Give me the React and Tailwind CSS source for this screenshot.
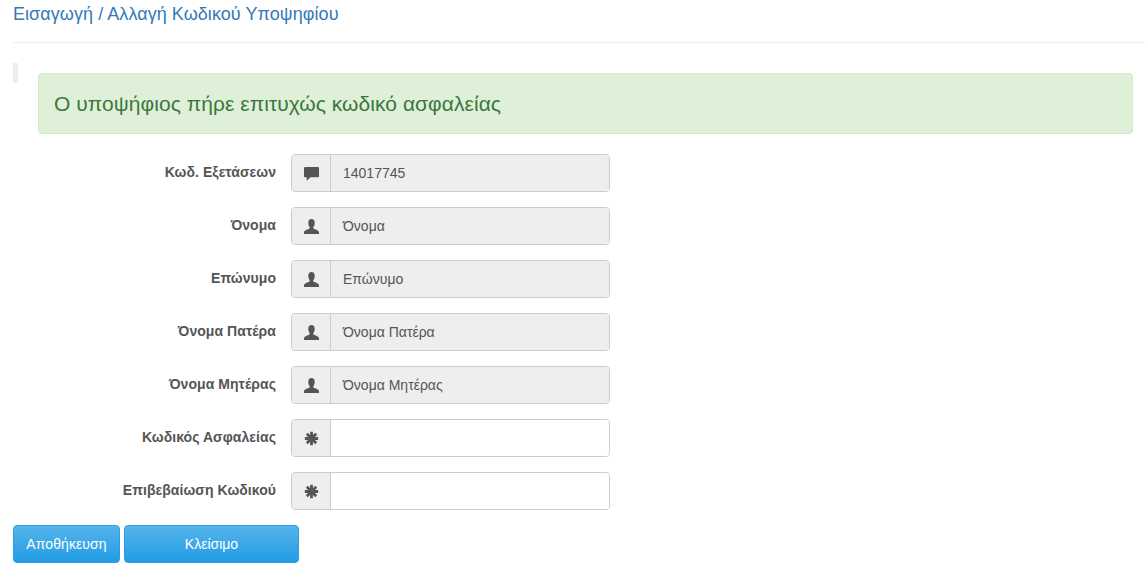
const ff = "font-['Liberation_Sans',Arial,sans-serif]";

function Comment() {
  return (
    <svg width="15" height="15" viewBox="0 0 14 14" className="block">
      <path d="M0 2Q0 1 1 1H13Q14 1 14 2V9.5Q14 10.5 13 10.5H6L2.5 13.8V10.5H1Q0 10.5 0 9.5Z" fill="#555" />
    </svg>
  );
}
function User() {
  return (
    <svg width="15" height="15" viewBox="0 0 14 14" className="block">
      <path d="M7 0C9 0 10 1.6 10 3.6C10 5.6 9.3 7 8.7 7.7C8.5 8.6 8.8 9 9.7 9.3C11.5 10 13.6 10.6 14 12.2V14H0V12.2C0.4 10.6 2.5 10 4.3 9.3C5.2 9 5.5 8.6 5.3 7.7C4.7 7 4 5.6 4 3.6C4 1.6 5 0 7 0Z" fill="#555" />
    </svg>
  );
}
function Asterisk() {
  return (
    <svg width="15" height="15" viewBox="0 0 14 14" className="block">
      <g stroke="#555" strokeWidth="2.6">
        <path d="M7 0.8V13.2" />
        <path d="M0.8 7H13.2" />
        <path d="M2.6 2.6L11.4 11.4" />
        <path d="M11.4 2.6L2.6 11.4" />
      </g>
      <circle cx="7" cy="7" r="3.6" fill="#555" />
    </svg>
  );
}

const rows = [
  { label: "Κωδ. Εξετάσεων", icon: <Comment />, value: "14017745", disabled: true },
  { label: "Όνομα", icon: <User />, placeholder: "Όνομα", disabled: true },
  { label: "Επώνυμο", icon: <User />, placeholder: "Επώνυμο", disabled: true },
  { label: "Όνομα Πατέρα", icon: <User />, placeholder: "Όνομα Πατέρα", disabled: true },
  { label: "Όνομα Μητέρας", icon: <User />, placeholder: "Όνομα Μητέρας", disabled: true },
  { label: "Κωδικός Ασφαλείας", icon: <Asterisk />, disabled: false },
  { label: "Επιβεβαίωση Κωδικού", icon: <Asterisk />, disabled: false },
];

function Row({ label, icon, value, placeholder, disabled }) {
  return (
    <div className="flex h-[38px] items-center">
      <label className="w-[263px] pb-[1px] text-right text-[14px] font-bold tracking-[0.06px] text-[#555]">{label}</label>
      <div className="ml-[15px] flex h-[38px] w-[319px] overflow-hidden rounded-[4px] border border-[#ccc]">
        <span className="flex w-[39px] shrink-0 items-center justify-center border-r border-[#ccc] bg-[#eee]">{icon}</span>
        <span className={`flex-1 pl-3 pt-[8px] text-[14px] leading-[20px] ${disabled ? "bg-[#eee]" : "bg-white"} text-[#555]`}>
          {value || placeholder || ""}
        </span>
      </div>
    </div>
  );
}

export default function App() {
  return (
    <div className={`h-[578px] w-[1146px] overflow-hidden bg-white ${ff}`}>
      <div className="pl-[13px]">
        <h4 className="pt-[4px] text-[18px] leading-[20px] tracking-[0.06px] text-[#337ab7]">Εισαγωγή / Αλλαγή Κωδικού Υποψηφίου</h4>
        <div className="mt-[18px] h-px bg-[#eee]" />
        <div className="flex pt-[20px]">
          <div className="h-[20px] w-[5px] bg-[#eee]" />
          <div className="mr-[13px] mt-[10px] ml-[20px] flex h-[61px] flex-1 items-center rounded-[4px] border border-[#d6e9c6] bg-[#dff0d8] pl-[15px] pt-[1px] text-[21px] tracking-[0.05px] text-[#3c763d]">
            Ο υποψήφιος πήρε επιτυχώς κωδικό ασφαλείας
          </div>
        </div>
        <div className="mt-[20px] flex flex-col gap-[15px]">
          {rows.map((r) => (
            <Row key={r.label} {...r} />
          ))}
        </div>
        <div className="mt-[15px] flex gap-[4px]">
          <button className="h-[38px] w-[107px] rounded-[4px] border border-[#2b9fe2] bg-gradient-to-b from-[#54b4eb] to-[#1d9ce5] pt-[1px] text-[14px] tracking-[0.1px] text-white">Αποθήκευση</button>
          <button className="h-[38px] w-[175px] rounded-[4px] border border-[#2b9fe2] bg-gradient-to-b from-[#54b4eb] to-[#1d9ce5] pt-[1px] text-[14px] text-white">Κλείσιμο</button>
        </div>
      </div>
    </div>
  );
}
